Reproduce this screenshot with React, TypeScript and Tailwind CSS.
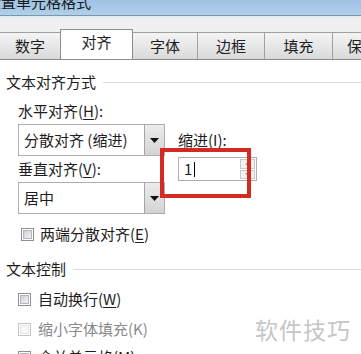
import React from "react";

const font = { fontFamily: '"Noto Sans CJK SC", "Microsoft YaHei", sans-serif' };

function Checkbox({ disabled }: { disabled?: boolean }) {
  return (
    <div
      className={
        "w-[13px] h-[13px] border flex items-center justify-center bg-white " +
        (disabled ? "border-[#c4c4c4]" : "border-[#8e8f8f]")
      }
    >
      <div
        className={
          "w-[9px] h-[9px] " +
          (disabled
            ? "bg-gradient-to-br from-[#f4f4f4] to-[#fbfbfb] border border-[#e6e6e6]"
            : "bg-gradient-to-br from-[#cbcfd5] to-[#f4f4f4] border border-[#b3b6ba]")
        }
      />
    </div>
  );
}

function Combo({ text }: { text: string }) {
  return (
    <div className="w-[147px] h-[32px] border border-[#abadb3] bg-white flex items-stretch">
      <div className="flex-1 flex items-center pl-[5px] text-[15px] text-[#1e1e1e] whitespace-nowrap">{text}</div>
      <div className="w-[20px] border-l border-[#a5a5a5] bg-gradient-to-b from-[#ececec] to-[#d3d3d3] flex items-center justify-center">
        <svg width="9" height="5" viewBox="0 0 9 5">
          <path d="M0 0 H9 L4.5 5 Z" fill="#111" />
        </svg>
      </div>
    </div>
  );
}

function Tab({ label, w, selected }: { label: string; w: string; selected?: boolean }) {
  return (
    <div
      className={
        "shrink-0 flex items-center justify-center text-[15px] text-[#1e1e1e] border-r border-[#8c8c8c] whitespace-nowrap " +
        w +
        (selected
          ? " h-[31px] bg-white border-l border-t border-[#8c8c8c] border-b-0 pb-[6px] -mb-px relative z-10"
          : " h-[27px] bg-gradient-to-b from-[#f4f4f4] to-[#dadada] border-t border-[#a0a0a0]")
      }
    >
      {label}
    </div>
  );
}

export default function App() {
  return (
    <div className="w-[361px] h-[354px] overflow-hidden bg-white relative" style={font}>
      {/* title bar */}
      <div className="h-[15px] overflow-hidden bg-gradient-to-b from-[#9fc3e4] to-[#b0cfeb]">
        <div className="ml-[-14px] mt-[-9px] text-[15px] leading-[22px] text-[#1a1a1a] whitespace-nowrap">
          设置单元格格式
        </div>
      </div>
      <div className="h-px bg-[#7f95aa]" />
      <div className="h-[2px] bg-[#e4ebf3]" />
      {/* tab strip */}
      <div className="bg-[#f0f0f0] pt-[11px]">
        <div className="flex items-end h-[31px] border-b border-[#8c8c8c] overflow-hidden">
          <Tab label="数字" w="w-[61px]" />
          <Tab label="对齐" w="w-[73px] -ml-px" selected />
          <Tab label="字体" w="w-[65px]" />
          <Tab label="边框" w="w-[67px]" />
          <Tab label="填充" w="w-[68px]" />
          <div className="shrink-0 h-[27px] w-[60px] pl-[14px] flex items-center text-[15px] text-[#1e1e1e] whitespace-nowrap bg-gradient-to-b from-[#f4f4f4] to-[#dadada] border-t border-[#a0a0a0]">
            保护
          </div>
        </div>
      </div>
      {/* content */}
      <div className="text-[15px] text-[#1e1e1e]">
        <div className="flex items-center mt-[12px] h-[20px] pl-[6px]">
          <span>文本对齐方式</span>
          <div className="flex-1 h-px bg-[#d8dfe4] ml-[7px]" />
        </div>
        <div className="pl-[18px]">
          <div className="mt-[9px] h-[20px] flex items-center">
            水平对齐(<span className="underline underline-offset-2">H</span>):
          </div>
          <div className="mt-[3px] flex items-center gap-[13px]">
            <Combo text="分散对齐 (缩进)" />
            <div>
              缩进(<span className="underline underline-offset-2">I</span>):
            </div>
          </div>
          <div className="mt-[1px] flex items-center gap-[13px]">
            <div className="w-[147px] h-[24px] flex items-center">
              垂直对齐(<span className="underline underline-offset-2">V</span>):
            </div>
            <div className="w-[79px] h-[24px] border border-[#abadb3] bg-white flex">
              <div className="flex-1 flex items-center pl-[5px]">
                1<span className="inline-block w-px h-[15px] bg-black ml-[2px]" />
              </div>
              <div className="w-[17px] flex flex-col gap-px p-px">
                <div className="flex-1 border border-[#c9c9c9] bg-[#f2f2f2] flex items-center justify-center">
                  <svg width="5" height="3" viewBox="0 0 5 3">
                    <path d="M0 3 L2.5 0 L5 3 Z" fill="#9a9a9a" />
                  </svg>
                </div>
                <div className="flex-1 border border-[#c9c9c9] bg-[#f2f2f2] flex items-center justify-center">
                  <svg width="5" height="3" viewBox="0 0 5 3">
                    <path d="M0 0 H5 L2.5 3 Z" fill="#9a9a9a" />
                  </svg>
                </div>
              </div>
            </div>
          </div>
          <div className="mt-[1px]">
            <Combo text="居中" />
          </div>
          <div className="mt-[11px] h-[18px] flex items-center gap-[6px] pl-[3px]">
            <Checkbox />
            <span>
              两端分散对齐(<span className="underline underline-offset-2">E</span>)
            </span>
          </div>
        </div>
        <div className="flex items-center mt-[16px] h-[20px] pl-[6px]">
          <span>文本控制</span>
          <div className="flex-1 h-px bg-[#d8dfe4] ml-[7px]" />
        </div>
        <div className="pl-[18px]">
          <div className="mt-[10px] h-[20px] flex items-center gap-[7px]">
            <Checkbox />
            <span>
              自动换行(<span className="underline underline-offset-2">W</span>)
            </span>
          </div>
          <div className="mt-[10px] h-[20px] flex items-center gap-[7px]">
            <Checkbox disabled />
            <span className="text-[#8a8a8a]">缩小字体填充(K)</span>
            <span className="ml-auto mr-[10px] text-[23px] text-[#c6c6c6] tracking-[1px]">软件技巧</span>
          </div>
          <div className="mt-[8px] h-[20px] flex items-center gap-[7px]">
            <Checkbox />
            <span>
              合并单元格(<span className="underline underline-offset-2">M</span>)
            </span>
          </div>
        </div>
      </div>
      {/* red highlight */}
      <div className="absolute left-[160px] top-[148px] w-[91px] h-[50px] border-[4px] border-[#d42a22]" />
    </div>
  );
}
